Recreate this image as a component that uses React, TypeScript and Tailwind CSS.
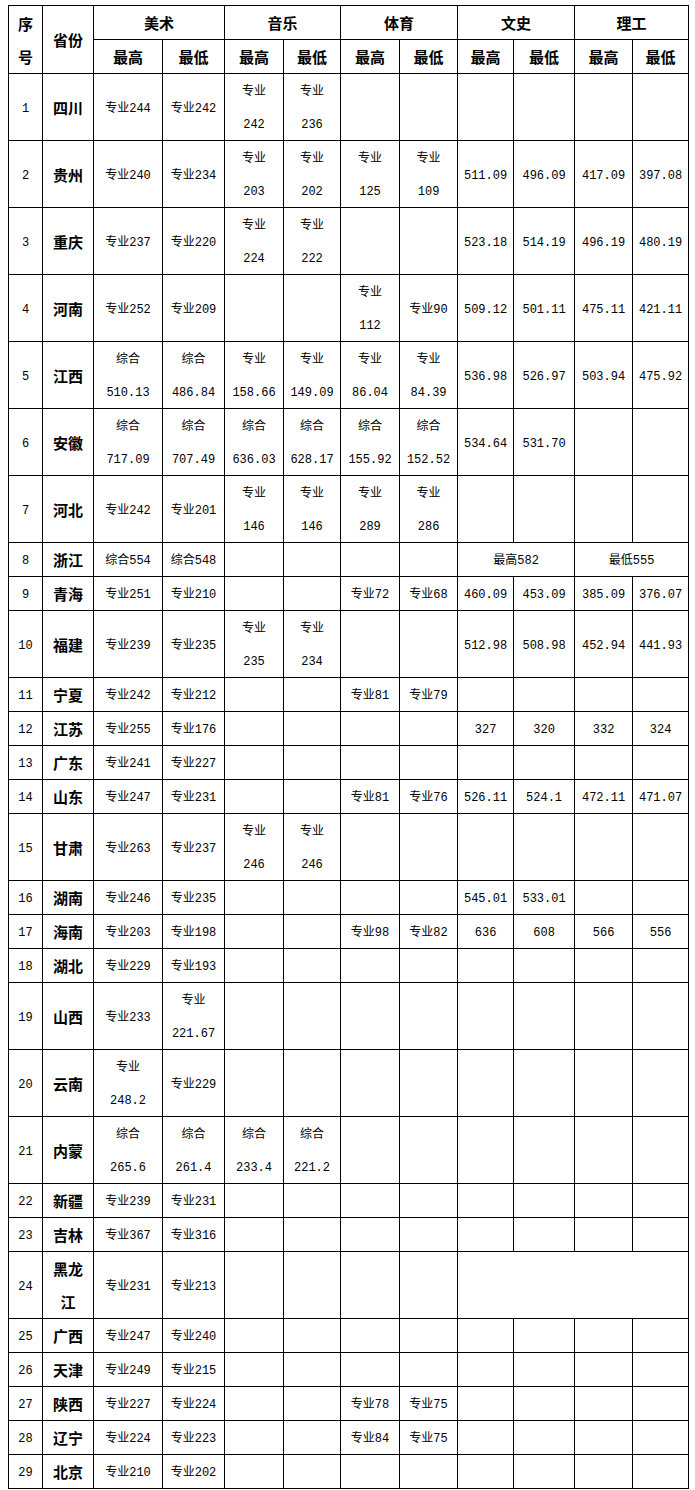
type Cell = string | { t: string; span: number };

type Row = { no: number; name: string; cells: Cell[] };

const rows: Row[] = [
  { no: 1, name: "四川", cells: ["专业244", "专业242", "专业\n242", "专业\n236", "", "", "", "", "", ""] },
  { no: 2, name: "贵州", cells: ["专业240", "专业234", "专业\n203", "专业\n202", "专业\n125", "专业\n109", "511.09", "496.09", "417.09", "397.08"] },
  { no: 3, name: "重庆", cells: ["专业237", "专业220", "专业\n224", "专业\n222", "", "", "523.18", "514.19", "496.19", "480.19"] },
  { no: 4, name: "河南", cells: ["专业252", "专业209", "", "", "专业\n112", "专业90", "509.12", "501.11", "475.11", "421.11"] },
  { no: 5, name: "江西", cells: ["综合\n510.13", "综合\n486.84", "专业\n158.66", "专业\n149.09", "专业\n86.04", "专业\n84.39", "536.98", "526.97", "503.94", "475.92"] },
  { no: 6, name: "安徽", cells: ["综合\n717.09", "综合\n707.49", "综合\n636.03", "综合\n628.17", "综合\n155.92", "综合\n152.52", "534.64", "531.70", "", ""] },
  { no: 7, name: "河北", cells: ["专业242", "专业201", "专业\n146", "专业\n146", "专业\n289", "专业\n286", "", "", "", ""] },
  { no: 8, name: "浙江", cells: ["综合554", "综合548", "", "", "", "", { t: "最高582", span: 2 }, { t: "最低555", span: 2 }] },
  { no: 9, name: "青海", cells: ["专业251", "专业210", "", "", "专业72", "专业68", "460.09", "453.09", "385.09", "376.07"] },
  { no: 10, name: "福建", cells: ["专业239", "专业235", "专业\n235", "专业\n234", "", "", "512.98", "508.98", "452.94", "441.93"] },
  { no: 11, name: "宁夏", cells: ["专业242", "专业212", "", "", "专业81", "专业79", "", "", "", ""] },
  { no: 12, name: "江苏", cells: ["专业255", "专业176", "", "", "", "", "327", "320", "332", "324"] },
  { no: 13, name: "广东", cells: ["专业241", "专业227", "", "", "", "", "", "", "", ""] },
  { no: 14, name: "山东", cells: ["专业247", "专业231", "", "", "专业81", "专业76", "526.11", "524.1", "472.11", "471.07"] },
  { no: 15, name: "甘肃", cells: ["专业263", "专业237", "专业\n246", "专业\n246", "", "", "", "", "", ""] },
  { no: 16, name: "湖南", cells: ["专业246", "专业235", "", "", "", "", "545.01", "533.01", "", ""] },
  { no: 17, name: "海南", cells: ["专业203", "专业198", "", "", "专业98", "专业82", "636", "608", "566", "556"] },
  { no: 18, name: "湖北", cells: ["专业229", "专业193", "", "", "", "", "", "", "", ""] },
  { no: 19, name: "山西", cells: ["专业233", "专业\n221.67", "", "", "", "", "", "", "", ""] },
  { no: 20, name: "云南", cells: ["专业\n248.2", "专业229", "", "", "", "", "", "", "", ""] },
  { no: 21, name: "内蒙", cells: ["综合\n265.6", "综合\n261.4", "综合\n233.4", "综合\n221.2", "", "", "", "", "", ""] },
  { no: 22, name: "新疆", cells: ["专业239", "专业231", "", "", "", "", "", "", "", ""] },
  { no: 23, name: "吉林", cells: ["专业367", "专业316", "", "", "", "", "", "", "", ""] },
  { no: 24, name: "黑龙\n江", cells: ["专业231", "专业213", "", "", "", "", { t: "", span: 4 }] },
  { no: 25, name: "广西", cells: ["专业247", "专业240", "", "", "", "", "", "", "", ""] },
  { no: 26, name: "天津", cells: ["专业249", "专业215", "", "", "", "", "", "", "", ""] },
  { no: 27, name: "陕西", cells: ["专业227", "专业224", "", "", "专业78", "专业75", "", "", "", ""] },
  { no: 28, name: "辽宁", cells: ["专业224", "专业223", "", "", "专业84", "专业75", "", "", "", ""] },
  { no: 29, name: "北京", cells: ["专业210", "专业202", "", "", "", "", "", "", "", ""] },
];

const widths = [34, 51, 69, 62, 59, 57, 59, 58, 56, 61, 58, 56];
const groups = ["美术", "音乐", "体育", "文史", "理工"];

const td = "border border-black p-0 text-center align-middle leading-[33px]";
const head = `${td} font-bold text-[15px] font-['Noto_Sans_CJK_SC',sans-serif]`;
const body = `${td} text-[12px] font-['Liberation_Mono','Noto_Sans_CJK_SC',monospace]`;

function Lines({ text, shift }: { text: string; shift?: boolean }) {
  const parts = text.split("\n");
  return (
    <>
      {parts.map((p, i) => (
        <span key={i} className={shift ? "block relative top-[2px]" : "block"}>
          {p || "\u00a0"}
        </span>
      ))}
    </>
  );
}

export default function App() {
  return (
    <div className="bg-white w-[695px] min-h-[1490px] pt-[5px] pl-[8px] text-black">
      <table className="table-fixed border-collapse w-[680px]">
        <colgroup>
          {widths.map((w, i) => (
            <col key={i} style={{ width: w }} />
          ))}
        </colgroup>
        <thead>
          <tr>
            <th rowSpan={2} className={head}>
              <Lines text={"序\n号"} />
            </th>
            <th rowSpan={2} className={head}>
              省份
            </th>
            {groups.map((g) => (
              <th key={g} colSpan={2} className={head}>
                {g}
              </th>
            ))}
          </tr>
          <tr>
            {groups.flatMap((g) => [
              <th key={g + "h"} className={head}>
                最高
              </th>,
              <th key={g + "l"} className={head}>
                最低
              </th>,
            ])}
          </tr>
        </thead>
        <tbody>
          {rows.map((r) => (
            <tr key={r.no}>
              <td className={body}>
                <Lines text={String(r.no)} shift />
              </td>
              <td className={head}>
                <Lines text={r.name} />
              </td>
              {r.cells.map((c, i) =>
                typeof c === "string" ? (
                  <td key={i} className={body}>
                    {c ? <Lines text={c} shift /> : null}
                  </td>
                ) : (
                  <td key={i} colSpan={c.span} className={body}>
                    {c.t ? <Lines text={c.t} shift /> : null}
                  </td>
                )
              )}
            </tr>
          ))}
        </tbody>
      </table>
    </div>
  );
}
